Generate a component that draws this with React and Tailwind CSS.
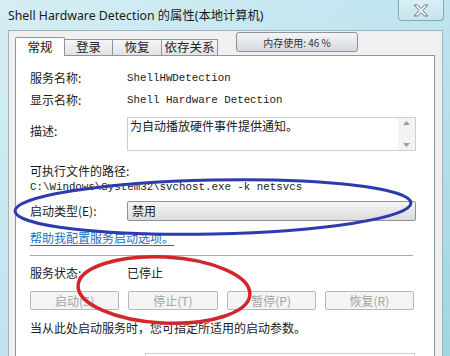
import React from "react";

const cjk = { fontFamily: '"Noto Sans CJK SC", "Noto Sans", sans-serif' };
const mono = { fontFamily: '"Liberation Mono", "Noto Sans CJK SC", monospace' };
const title = { fontFamily: '"Noto Sans", "Noto Sans CJK SC", sans-serif' };

function Tab({ label, w, active }) {
  return active ? (
    <div
      className={`${w} h-[19px] -mb-px z-10 bg-white border border-b-0 border-[#8c96a0] rounded-t-[2px] flex items-center justify-center text-[12.5px] text-[#111]`}
    >
      {label}
    </div>
  ) : (
    <div
      className={`${w} h-[16px] bg-gradient-to-b from-[#f6f6f6] to-[#e2e2e2] border border-b-0 border-l-0 border-[#8c96a0] flex items-center justify-center text-[12.5px] text-[#222]`}
    >
      {label}
    </div>
  );
}

function Btn({ label }) {
  return (
    <div className="h-[19px] bg-[#f4f4f4] border border-[#b5b9bc] rounded-[2px] flex items-center justify-center text-[12px] text-[#a3a3a3]">
      {label}
    </div>
  );
}

export default function App() {
  return (
    <div
      className="relative w-[450px] h-[356px] overflow-hidden bg-gradient-to-br from-[#d6eef5] via-[#bfe4ee] to-[#9fd6e2]"
      style={cjk}
    >
      {/* title bar */}
      <div className="h-[30px] flex items-start justify-between">
        <div className="pl-[8px] pt-[7px] text-[12.3px] leading-[18px] text-[#1a1a1a]" style={title}>
          Shell Hardware Detection 的属性(本地计算机)
        </div>
        <div className="mr-[6px] w-[46px] h-[21px] rounded-b-[4px] border border-t-0 border-[#8aa8b4] bg-gradient-to-b from-[#e4f3f8]/70 to-[#c7e5ee]/70 flex items-center justify-center">
          <svg width="16" height="13" viewBox="0 0 16 13">
            <path
              d="M1 1h3.5l3.5 3.5 3.5-3.5h3.5l-5.2 5.5 5.2 5.5h-3.5l-3.5-3.5-3.5 3.5h-3.5l5.2-5.5z"
              fill="#f4f7f8"
              stroke="#6b7780"
              strokeWidth="1"
              strokeLinejoin="round"
            />
          </svg>
        </div>
      </div>

      {/* client area */}
      <div className="ml-[8px] mr-[7px] h-[326px] bg-[#f0f0f0] border-l border-t border-r border-[#9fb3bd] pl-[6px] pr-[7px] pt-[6px]">
        <div className="flex items-end">
          <Tab label="常规" w="w-[50px] border-l" active />
          <Tab label="登录" w="w-[48px]" />
          <Tab label="恢复" w="w-[49px]" />
          <Tab label="依存关系" w="w-[56px]" />
        </div>

        {/* panel */}
        <div className="w-[420px] h-[310px] bg-white border border-[#8c96a0] pl-[14px] pt-[14px]">
          <div className="flex h-[16px] items-center">
            <div className="w-[97px] text-[12px] text-[#1a1a1a]">服务名称:</div>
            <div className="text-[10.8px] text-[#1a1a1a]" style={mono}>ShellHWDetection</div>
          </div>
          <div className="flex h-[16px] items-center mt-[6px]">
            <div className="w-[97px] text-[12px] text-[#1a1a1a]">显示名称:</div>
            <div className="text-[10.8px] text-[#1a1a1a]" style={mono}>Shell Hardware Detection</div>
          </div>
          <div className="flex mt-[9px]">
            <div className="w-[97px] pt-[6px] text-[12px] leading-[16px] text-[#1a1a1a]">描述:</div>
            <div className="w-[289px] h-[34px] border border-[#c9ced3] flex">
              <div className="flex-1 pl-[2px] text-[12px] leading-[15px] text-[#1a1a1a]">为自动播放硬件事件提供通知。</div>
              <div className="w-[17px] bg-[#f3f3f3] flex flex-col items-center justify-between py-[3px]">
                <svg width="7" height="4" viewBox="0 0 7 4"><path d="M0 4L3.5 0 7 4z" fill="#9aa0a6" /></svg>
                <svg width="7" height="4" viewBox="0 0 7 4"><path d="M0 0L3.5 4 7 0z" fill="#9aa0a6" /></svg>
              </div>
            </div>
          </div>
          <div className="h-[16px] mt-[12px] flex items-center text-[12px] text-[#1a1a1a]">可执行文件的路径:</div>
          <div className="h-[16px] flex items-center text-[10.8px] text-[#1a1a1a]" style={mono}>
            C:\Windows\System32\svchost.exe -k netsvcs
          </div>
          <div className="flex items-center mt-[6px]">
            <div className="w-[97px] text-[12px] text-[#1a1a1a]">启动类型(E):</div>
            <div className="w-[289px] h-[20px] border border-[#8d9399] rounded-[2px] bg-gradient-to-b from-[#f4f4f4] to-[#dcdcdc] flex items-center pl-[4px] text-[12px] text-[#1a1a1a]">
              禁用
            </div>
          </div>
          <div className="h-[16px] mt-[9px] flex items-center text-[12px] text-[#1b6ec2] underline underline-offset-2">
            帮助我配置服务启动选项。
          </div>
          <div className="w-[383px] mt-[9px] border-t border-[#a8a8a8] border-b border-b-white" />
          <div className="flex h-[16px] items-center mt-[8px]">
            <div className="w-[97px] text-[12px] text-[#1a1a1a]">服务状态:</div>
            <div className="text-[12px] text-[#1a1a1a]">已停止</div>
          </div>
          <div className="w-[384px] grid grid-cols-4 gap-[9px] mt-[10px]">
            <Btn label="启动(S)" />
            <Btn label="停止(T)" />
            <Btn label="暂停(P)" />
            <Btn label="恢复(R)" />
          </div>
          <div className="h-[16px] mt-[10px] flex items-center text-[12px] text-[#1a1a1a]">
            当从此处启动服务时，您可指定所适用的启动参数。
          </div>
          <div className="ml-[115px] mt-[17px] w-[270px] h-[20px] border border-[#c9ced3]" />
        </div>
      </div>

      {/* memory widget overlay */}
      <div className="absolute left-[236px] top-[32px] w-[122px] h-[20px] rounded-[3px] border border-[#8b9299] bg-gradient-to-b from-[#f3f5f7] to-[#d5dae0] flex items-center justify-center text-[10px] text-[#333]">
        内存使用: 46 %
      </div>

      {/* hand-drawn annotations */}
      <svg className="absolute inset-0 pointer-events-none" width="450" height="356" viewBox="0 0 450 356">
        <ellipse cx="213" cy="207" rx="198" ry="27" fill="none" stroke="#2c3cae" strokeWidth="3" transform="rotate(-1.2 213 207)" />
        <ellipse cx="164" cy="290" rx="86" ry="33" fill="none" stroke="#d2262c" strokeWidth="3.5" transform="rotate(3 164 290)" />
      </svg>
    </div>
  );
}
